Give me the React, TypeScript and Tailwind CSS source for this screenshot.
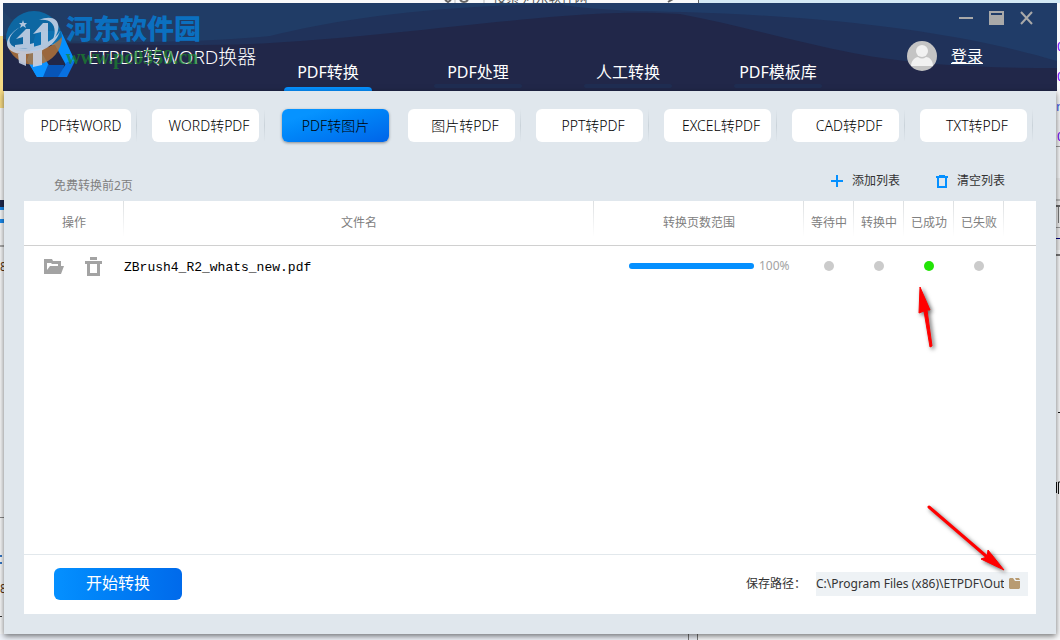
import { useState } from 'react';

const NAV = ['PDF转换', 'PDF处理', '人工转换', 'PDF模板库'];

const MODES = [
  'PDF转WORD',
  'WORD转PDF',
  'PDF转图片',
  '图片转PDF',
  'PPT转PDF',
  'EXCEL转PDF',
  'CAD转PDF',
  'TXT转PDF',
];

const STATUSES = ['等待中', '转换中', '已成功', '已失败'];

const FILES = [{ name: 'ZBrush4_R2_whats_new.pdf', progress: 100, status: '已成功' }];

const TH =
  'h-[45px] border-b border-[#d0d0d0] p-0 text-center font-normal bg-[linear-gradient(#dcdfe1,#ffffff)] bg-[length:1px_36px] bg-right-top bg-no-repeat';

function Desktop() {
  return (
    <svg aria-hidden="true" className="absolute inset-0 h-full w-full" viewBox="0 0 1060 640" preserveAspectRatio="none">
      <rect width="1060" height="640" fill="#f8f9fa" />
      <rect x="698" width="362" height="3" fill="#d3e9f6" />
      <rect x="698" width="1" height="3" fill="#666" />
      <path d="M445 0l3 2 3-2M460 0q4 4 8 0M668 2l5-3" fill="none" stroke="#666" strokeWidth="2" />
      <path d="M455 0v3M484 0v3" stroke="#bbb" />
      <text x="493" y="2" fontSize="13" fill="#555">搜索 河东软件网</text>
      <rect y="36" width="4" height="72" fill="#f6da84" />
      <rect y="200" width="4" height="7" fill="#20294e" />
      <rect y="207" width="4" height="3" fill="#1b8cf0" />
      <rect y="219" width="4" height="4" fill="#1b8cf0" />
      <rect y="245" width="4" height="2" fill="#aaa" />
      <rect y="517" width="4" height="1" fill="#888" />
      <rect y="555" width="2" height="2" fill="#3476c4" />
      <rect y="562" width="2" height="2" fill="#3476c4" />
      <rect y="616" width="2" height="1" fill="#333" />
      <text x="0" y="271" fontSize="12" fill="#5a3410">8</text>
      <text x="0" y="593" fontSize="12" fill="#5a3410">8</text>
      <rect x="1056" y="120" width="4" height="26" fill="#f3f3f5" />
      <g fill="#6a00f4" fontSize="13">
        <text x="1057" y="51">0</text>
        <text x="1057" y="81">0</text>
        <text x="1057" y="141">0</text>
      </g>
      <text x="1056" y="111" fontSize="13" fill="#3b5bea">n</text>
      <rect x="1056" y="146" width="4" height="1" fill="#999" />
      <rect x="1056" y="178" width="4" height="72" fill="#ededed" />
      <rect x="1056" y="199" width="4" height="2" fill="#bbb" />
      <rect x="1056" y="205" width="4" height="2" fill="#666" />
      <rect x="1058" y="207" width="1" height="16" fill="#777" />
      <rect x="1056" y="227" width="4" height="1" fill="#999" />
      <rect x="1056" y="238" width="4" height="1" fill="#000080" />
      <rect x="1056" y="254" width="4" height="2" fill="#777" />
      <rect x="1058" y="412" width="2" height="1" fill="#111" />
      <path d="M1056.500 482v11M1058.500 494v-12h2" fill="none" stroke="#111" />
      <rect y="634" width="697" height="6" fill="#edf1f8" />
      <path d="M688.500 634v6M697.500 634v6" stroke="#777" />
    </svg>
  );
}

function HeaderWaves() {
  return (
    <svg aria-hidden="true" className="absolute inset-0 h-full w-full" viewBox="0 0 1054 88" preserveAspectRatio="none">
      <rect width="1054" height="88" fill="#212749" />
      <path d="M0 36C90 42 190 44 267 40C370 34 480 19 560 13C610 9 640 9 677 11C735 22 790 38 850 50C910 62 980 65 1054 65V0H0Z" fill="#20325a" />
      <path d="M0 0V32C60 40 180 42 267 33C320 20 390 8 490 3C540 1 580 0 600 0Z" fill="#203c66" />
      <path d="M560 2C600 8 640 8 680 9C840 14 960 30 1054 58V0H560Z" fill="#203c68" />
      <path d="M0 5C5 30 90 36 140 39C60 42 30 40 0 36Z" fill="#214a70" opacity=".35" />
    </svg>
  );
}

function AppLogo() {
  return (
    <svg aria-hidden="true" className="h-12 w-12" viewBox="0 0 48 48">
      <path d="M10 0H34L28 14H18L12 29L20 46H10L0 29Z" fill="#0b93ff" />
      <path d="M10 0H34L30 14H17Z" fill="#3aa6ff" />
      <path d="M34 0L48 30L39 34L28 14Z" fill="#058fff" />
      <path d="M12 17L24 38L19 46H10L0 29Z" fill="#0a91ff" />
      <path d="M21 34H37L35 46H16Z" fill="#0755b8" />
      <path d="M40 31L48 30L40 46H31Z" fill="#0870e0" />
    </svg>
  );
}

function Watermark() {
  return (
    <div aria-hidden="true" className="pointer-events-none absolute top-2 left-[3px] flex gap-1">
      <svg className="h-14 w-14" viewBox="0 0 56 56">
        <path d="M0 28A28 28 0 0 1 56 28C42 38 16 44 2 36Z" fill="#0b6ba8" opacity=".9" />
        <path d="M2 36A28 28 0 0 0 56 26C42 42 16 44 2 36Z" fill="#b0733a" opacity=".85" />
        <g fill="#c9d3e6" opacity=".88">
          <path d="M17 9l1 3h3l-2 2 1 3-3-2-3 2 1-3-2-2h3z" />
          <path d="M10 28L20 18H24V33L28 32V37L9 38V34L17 33V26Z" />
          <path d="M27 23L37 12H42V32L35 36V21Z" />
          <path d="M12 43L20 42V55L13 52ZM27 41L36 37V54L27 56Z" />
          <path d="M14 16C-6 30 6 40 22 37C38 34 50 28 54 20C50 34 36 42 20 43C-2 44-6 28 14 16Z" />
          <path d="M33 9C49 2 60 12 46 31C52 18 48 7 33 9Z" />
        </g>
      </svg>
      <div className="pt-1">
        <p className="text-[27px] leading-7 font-black text-[#0b70c0]">河东软件园</p>
        <p className="font-['Liberation_Serif',serif] text-[20px] leading-7 font-bold text-[#1b8a2c]/70">www.pc0359.cn</p>
      </div>
    </div>
  );
}

function TrashIcon({ className }: { className?: string }) {
  return (
    <svg aria-hidden="true" className={className} viewBox="0 0 17 19" fill="currentColor">
      <path fillRule="evenodd" d="M5 0h7v3H5zM0 4h17v3h-2v12H2V7H0zM5 7v9h7V7z" />
    </svg>
  );
}

function FolderOpenIcon() {
  return (
    <svg aria-hidden="true" className="h-[15px] w-5" viewBox="0 0 20 15" fill="currentColor">
      <path fillRule="evenodd" d="M0 0h8l1 2h8v5h3l-3 8H0zM3 4v7l3-4h8V5H8L7 4z" />
    </svg>
  );
}

function Arrows() {
  return (
    <>
      <svg aria-hidden="true" className="pointer-events-none absolute top-[284px] right-[118px] h-[68px] w-[30px] drop-shadow-[2px_2px_2px_rgba(0,0,0,0.6)]" viewBox="0 0 30 68">
        <path d="M8 3L7 29L12 27L18 63L20 62L15 26L18 26Z" fill="#f00" stroke="#f00" strokeLinejoin="round" />
      </svg>
      <svg aria-hidden="true" className="pointer-events-none absolute top-[502px] right-[52px] h-[74px] w-[84px] drop-shadow-[2px_2px_2px_rgba(0,0,0,0.6)]" viewBox="0 0 84 74">
        <path d="M5 5L62 54" stroke="#f00" strokeWidth="3" strokeLinecap="round" />
        <path d="M80 68L57 57L63 55L64 48Z" fill="#f00" stroke="#f00" strokeLinejoin="round" />
      </svg>
    </>
  );
}

export default function App() {
  const [page, setPage] = useState('PDF转换');
  const [mode, setMode] = useState('PDF转图片');
  const [path, setPath] = useState('C:\\Program Files (x86)\\ETPDF\\Output');

  return (
    <div className="relative flex min-h-screen flex-col overflow-hidden px-[3px] pt-[3px] pb-1.5 font-['Noto_Sans','Noto_Sans_CJK_SC',sans-serif] text-xs">
      <Desktop />

      <header className="relative flex h-22 text-white">
        <HeaderWaves />
        <div className="relative flex w-[281px] shrink-0 pt-7 pl-6">
          <AppLogo />
          <h1 className="pt-3 pl-[13px] text-[19px] leading-7 font-light whitespace-nowrap">ETPDF转WORD换器</h1>
        </div>
        <Watermark />

        <nav className="relative flex gap-[62px]">
          {NAV.map(item => (
            <a
              key={item}
              href="#"
              aria-current={page === item ? 'page' : undefined}
              onClick={() => setPage(item)}
              className="flex w-22 flex-col items-center pt-[57px] text-base leading-6 whitespace-nowrap"
            >
              {item}
              <span className={page === item ? 'mt-[3px] h-1 w-full rounded-t-sm bg-[#0590ff]' : 'h-1 w-full rounded-sm bg-[#1f2d52]'} />
            </a>
          ))}
        </nav>

        <div className="relative ml-auto flex flex-col items-end pt-2 pr-6 text-[#a9a9a9]">
          <div className="flex gap-4">
            <button aria-label="最小化" className="h-[14px] w-[14px]">
              <svg viewBox="0 0 14 14"><path d="M0 6h14v2H0z" fill="currentColor" /></svg>
            </button>
            <button aria-label="最大化" className="h-[14px] w-[15px]">
              <svg viewBox="0 0 15 14"><path fillRule="evenodd" d="M0 0h15v14H0zM2 2v2h11V2z" fill="currentColor" /></svg>
            </button>
            <button aria-label="关闭" className="h-[14px] w-[13px]">
              <svg viewBox="0 0 13 14"><path d="M1 1l11 12M12 1L1 13" fill="none" stroke="currentColor" strokeWidth="2" /></svg>
            </button>
          </div>
          <div className="flex items-center gap-[14px] pt-4 pr-[50px]">
            <svg aria-hidden="true" className="h-[30px] w-[30px]" viewBox="0 0 30 30">
              <circle cx="15" cy="15" r="15" fill="#c4c4c4" />
              <circle cx="15" cy="10" r="6" fill="#f1f1f1" />
              <path d="M4 25C4 19 9 16 11 16Q15 19 19 16C22 16 26 19 26 25Z" fill="#f1f1f1" />
            </svg>
            <a href="#" className="text-base leading-6 text-white underline">登录</a>
          </div>
        </div>
      </header>

      <main className="relative mx-px flex flex-1 flex-col bg-[#e0e7ed] px-5 pb-5 shadow-[0_2px_6px_rgba(0,0,0,0.55)]">
        <div className="-mr-3 grid grid-cols-8 pt-[18px]">
          {MODES.map(item => (
            <div key={item} className="flex h-[33px]">
              <button
                aria-pressed={mode === item}
                onClick={() => setMode(item)}
                className={`w-[107px] shrink-0 rounded-md text-sm font-light whitespace-nowrap text-black ${
                  mode === item
                    ? 'ml-0.5 bg-linear-to-br from-[#0693ff] from-20% to-[#0064e8] shadow-[0_1px_3px_rgba(0,0,0,0.4)]'
                    : 'bg-white pl-[7px]'
                }`}
              >
                {item}
              </button>
              {mode !== item && (
                <span className="ml-[5px] w-px bg-linear-to-b from-[#e0e7ed] via-[#cad3da] to-[#e0e7ed]" />
              )}
            </div>
          ))}
        </div>

        <div className="flex h-[59px] justify-between pr-[31px] pl-[30px] leading-4">
          <p className="pt-9 text-[#808080]">免费转换前2页</p>
          <div className="flex gap-9 pt-[31px] text-[#333]">
            <button className="flex h-4 items-center gap-[9px]">
              <svg aria-hidden="true" className="h-3 w-3 text-[#0590ff]" viewBox="0 0 12 12">
                <path d="M5 0h2v5h5v2H7v5H5V7H0V5h5z" fill="currentColor" />
              </svg>
              添加列表
            </button>
            <button className="flex h-4 items-center gap-[9px]">
              <svg aria-hidden="true" className="h-[13px] w-3 text-[#0590ff]" viewBox="0 0 12 13">
                <path fillRule="evenodd" d="M3 0h6v1h3v2h-1v10H1V3H0V1h3zM3 3v8h6V3z" fill="currentColor" />
              </svg>
              清空列表
            </button>
          </div>
        </div>

        <section className="flex flex-1 flex-col bg-white">
          <div className="flex-1">
            <table className="w-full table-fixed border-separate border-spacing-0">
              <colgroup>
                <col className="w-[100px]" />
                <col />
                <col className="w-[210px]" />
                {STATUSES.map(s => <col key={s} className="w-[50px]" />)}
                <col className="w-8" />
              </colgroup>
              <thead className="text-[#808080]">
                <tr>
                  <th className={TH}>操作</th>
                  <th className={TH}>文件名</th>
                  <th className={TH}>转换页数范围</th>
                  {STATUSES.map(s => <th key={s} className={TH}>{s}</th>)}
                  <td className="border-b border-[#d0d0d0]" />
                </tr>
              </thead>
              <tbody>
                {FILES.map(file => (
                  <tr key={file.name} className="h-10">
                    <td className="p-0">
                      <div className="flex items-center gap-[21px] pl-5 text-[#a3a3a3]">
                        <button aria-label="打开"><FolderOpenIcon /></button>
                        <button aria-label="删除"><TrashIcon className="h-[19px] w-[17px]" /></button>
                      </div>
                    </td>
                    <td className="p-0 pt-1 font-['Liberation_Mono',monospace] text-[13px] text-black">{file.name}</td>
                    <td className="p-0">
                      <div className="flex items-center gap-[5px] pl-[35px]">
                        <div role="progressbar" aria-label={file.name} aria-valuenow={file.progress} className="h-1.5 w-[125px] rounded-full bg-[#e0e7ed]">
                          <div className="h-full rounded-full bg-[#0590ff]" style={{ width: `${file.progress}%` }} />
                        </div>
                        <span className="text-[#a3a3a3]">{file.progress}%</span>
                      </div>
                    </td>
                    {STATUSES.map(s => (
                      <td key={s} className="p-0">
                        <span className={`mx-auto block h-2.5 w-2.5 rounded-full ${file.status === s ? 'bg-[#22e406]' : 'bg-[#cbcbcb]'}`} />
                      </td>
                    ))}
                    <td />
                  </tr>
                ))}
              </tbody>
            </table>
          </div>

          <footer className="flex h-[60px] items-center justify-between border-t border-[#e2e8ec] pr-2 pb-0.5 pl-[30px]">
            <button className="h-8 w-32 rounded-md bg-linear-to-r from-[#0590ff] to-[#006aeb] pb-0.5 text-base text-white">开始转换</button>
            <div className="flex items-center gap-[10px]">
              <label htmlFor="save-path" className="text-[#333]">保存路径：</label>
              <div className="flex h-6 items-center gap-[5px] bg-[#eef2f5] pr-2">
                <input
                  id="save-path"
                  value={path}
                  onChange={e => setPath(e.target.value)}
                  className="h-6 w-[188px] bg-transparent text-xs text-[#333] outline-none"
                />
                <button aria-label="选择文件夹">
                  <svg aria-hidden="true" className="h-[11px] w-[11px]" viewBox="0 0 11 11">
                    <path d="M1 0h3l2 3h5v7l-1 1H1l-1-1V1z" fill="#b89b72" />
                    <path d="M6 0h4l1 2H7z" fill="#b89b72" />
                  </svg>
                </button>
              </div>
            </div>
          </footer>
        </section>
      </main>

      <Arrows />
    </div>
  );
}
